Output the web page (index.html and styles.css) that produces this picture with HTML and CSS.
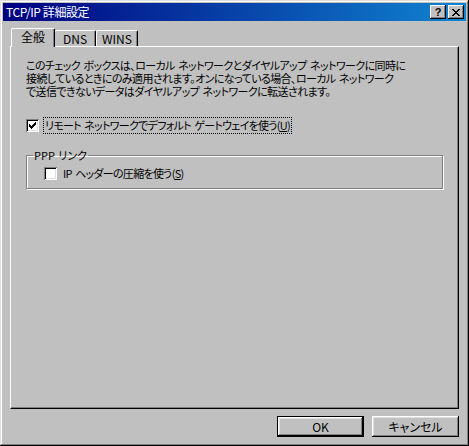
FILE: index.html
```html
<!DOCTYPE html>
<html lang="ja">
<head>
<meta charset="utf-8">
<title>TCP/IP 詳細設定</title>
<link rel="stylesheet" href="styles.css">
</head>
<body>
<div class="window">
  <div class="titlebar">
    <span class="title">TCP/IP 詳細設定</span>
    <div class="tbtns">
      <span class="tbtn help">?</span>
      <span class="tbtn close"><svg width="8" height="7" viewBox="0 0 8 7"><path d="M0 0h2v1h-2zM6 0h2v1h-2zM1 1h2v1h-2zM5 1h2v1h-2zM2 2h4v1h-4zM3 3h2v1h-2zM2 4h4v1h-4zM1 5h2v1h-2zM5 5h2v1h-2zM0 6h2v1h-2zM6 6h2v1h-2z" fill="#000"/></svg></span>
    </div>
  </div>
  <div class="body">
    <div class="tabs">
      <div class="tab sel">全般</div>
      <div class="tab t-dns">DNS</div>
      <div class="tab t-wins">WINS</div>
    </div>
    <div class="panel">
      <p class="desc">このチェック ボックスは、ローカル ネットワークとダイヤルアップ ネットワークに同時に<br>接続しているときにのみ適用されます。オンになっている場合、ローカル ネットワーク<br>で送信できないデータはダイヤルアップ ネットワークに転送されます。</p>
      <div class="check-row first">
        <span class="cbox"><svg width="7" height="7" viewBox="0 0 7 7"><path d="M6 0h1v1h-1zM5 1h2v1h-2zM4 2h3v1h-3zM0 2h1v1h-1zM0 3h2v1h-2zM3 3h3v1h-3zM0 4h5v1h-5zM1 5h3v1h-3zM2 6h1v1h-1z" fill="#000"/></svg></span>
        <span class="label focus">リモート ネットワークでデフォルト ゲートウェイを使う(<u>U</u>)</span>
      </div>
      <fieldset class="group">
        <legend>PPP リンク</legend>
        <div class="check-row">
          <span class="cbox"></span>
          <span class="label">IP ヘッダーの圧縮を使う(<u>S</u>)</span>
        </div>
      </fieldset>
    </div>
    <div class="buttons">
      <div class="btn default">OK</div>
      <div class="btn">キャンセル</div>
    </div>
  </div>
</div>
</body>
</html>
```

FILE: styles.css
```css
html, body {
  margin: 0;
  padding: 0;
  background: #c0c0c0;
}
body {
  font-family: "Noto Sans CJK JP", "Liberation Sans", sans-serif;
  font-size: 12px;
  font-feature-settings: "palt";
  color: #000;
}
.window {
  box-sizing: border-box;
  width: 469px;
  height: 446px;
  padding: 3px;
  background: #c0c0c0;
  box-shadow: inset -1px -1px #000, inset 1px 1px #dfdfdf, inset -2px -2px #808080, inset 2px 2px #fff;
  display: flex;
  flex-direction: column;
}
.titlebar {
  height: 18px;
  background: linear-gradient(to right, #000080 0%, #1084d0 100%);
  display: flex;
  align-items: center;
  justify-content: space-between;
  padding: 0 2px 0 3px;
  color: #fff;
}
.title {
  font-size: 12px;
  line-height: 18px;
  letter-spacing: -0.4px;
}
.tbtns {
  display: flex;
  gap: 2px;
}
.tbtn {
  box-sizing: border-box;
  width: 16px;
  height: 14px;
  background: #c0c0c0;
  box-shadow: inset -1px -1px #000, inset 1px 1px #fff, inset -2px -2px #808080;
  display: flex;
  align-items: center;
  justify-content: center;
  color: #000;
}
.help {
  font-family: "Liberation Sans", sans-serif;
  font-weight: bold;
  font-size: 11px;
  line-height: 14px;
}
.body {
  flex: 1;
  display: flex;
  flex-direction: column;
  padding: 0 7px;
}
.tabs {
  margin-top: 7px;
  height: 18px;
  display: flex;
  align-items: flex-end;
  padding-left: 1px;
  position: relative;
  z-index: 1;
}
.tab {
  box-sizing: border-box;
  height: 16px;
  background: #c0c0c0;
  border-top: 1px solid #fff;
  border-left: 1px solid #fff;
  border-right: 1px solid #000;
  box-shadow: inset -1px 0 #808080;
  border-radius: 2px 2px 0 0;
  display: flex;
  align-items: center;
  justify-content: center;
  line-height: 14px;
}
.tab.sel {
  width: 44px;
  height: 19px;
  margin-bottom: -1px;
  border-bottom: 0;
  padding-bottom: 2px;
}
.t-dns { width: 41px; border-left: 0; }
.t-wins { width: 42px; }
.panel {
  box-sizing: border-box;
  height: 363px;
  border-top: 1px solid #fff;
  border-left: 1px solid #fff;
  border-right: 1px solid #000;
  border-bottom: 1px solid #000;
  box-shadow: inset -1px -1px #808080;
  padding: 12px 15px 0 15px;
  display: flex;
  flex-direction: column;
}
.desc {
  margin: 0;
  font-size: 11px;
  line-height: 13px;
  white-space: nowrap;
  letter-spacing: -0.6px;
  word-spacing: 1.5px;
}
.check-row {
  display: flex;
  align-items: center;
  height: 17px;
}
.check-row.first {
  margin-top: 19px;
}
.cbox {
  box-sizing: border-box;
  width: 13px;
  height: 13px;
  background: #fff;
  box-shadow: inset 1px 1px #808080, inset -1px -1px #fff, inset 2px 2px #000, inset -2px -2px #dfdfdf;
  display: flex;
  align-items: center;
  justify-content: center;
  flex: none;
}
.label {
  margin-left: 4px;
  padding: 0 1px;
  font-size: 11px;
  line-height: 15px;
  border: 1px solid transparent;
  letter-spacing: -0.7px;
  word-spacing: 1.5px;
}
.label.focus {
  border: 1px dotted #000;
}
.group {
  margin: 15px 0 0 0;
  width: 417px;
  box-sizing: border-box;
  height: 40px;
  border: 1px solid #808080;
  box-shadow: 1px 1px #fff, inset 1px 1px #fff;
  padding: 3px 0 0 17px;
}
.group legend {
  padding: 0 1px;
  margin-left: -11px;
  font-size: 11px;
  line-height: 13px;
  word-spacing: 1px;
}
.buttons {
  display: flex;
  justify-content: flex-end;
  gap: 8px;
  margin-top: 7px;
}
.btn {
  box-sizing: border-box;
  width: 87px;
  height: 21px;
  background: #c0c0c0;
  box-shadow: inset -1px -1px #000, inset 1px 1px #fff, inset -2px -2px #808080, inset 2px 2px #dfdfdf;
  display: flex;
  align-items: center;
  justify-content: center;
  line-height: 14px;
}
.btn.default {
  box-shadow: inset 0 0 0 1px #000, inset -2px -2px #000, inset 2px 2px #fff, inset -3px -3px #808080, inset 3px 3px #dfdfdf;
}
```
